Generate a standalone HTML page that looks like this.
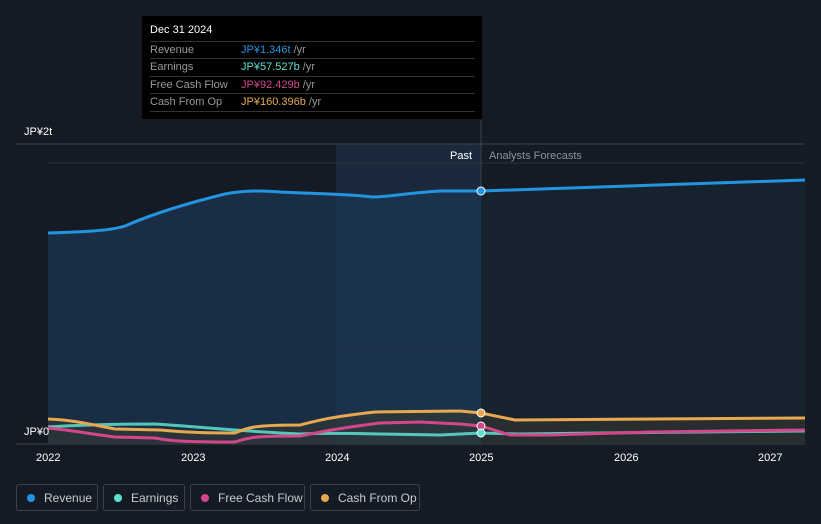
<!DOCTYPE html>
<html><head><meta charset="utf-8"><style>
body{margin:0;background:#151b25;width:821px;height:524px;overflow:hidden;font-family:"Liberation Sans",sans-serif;position:relative}
.tt{position:absolute;left:142px;top:16px;width:340px;height:103px;background:#000;color:#fff;font-size:11px}
.tt .h{position:absolute;left:8px;top:8px;font-size:11px}
.row{position:absolute;left:8px;width:325px;border-top:1px solid #333;height:17px;line-height:17px;color:#999}
.row span{position:absolute;left:91px}
.row i{font-style:normal;color:#999}
.lg{position:absolute;top:484px;height:27px;border:1px solid #3a414d;border-radius:3px;color:#c8cbd0;font-size:12px;line-height:27px;box-sizing:border-box}
.lg b{position:absolute;left:10px;top:9px;width:8px;height:8px;border-radius:50%}
.lg span{position:absolute;left:27px}
.ax{position:absolute;top:452px;color:#fff;font-size:11px}
</style></head><body>
<svg width="821" height="524" style="position:absolute;left:0;top:0">
<rect x="336" y="144" width="145" height="300" fill="#1a2a3c"/>
<line x1="16" y1="144" x2="805" y2="144" stroke="#39404b"/>
<line x1="48" y1="163" x2="805" y2="163" stroke="#2a313c"/>
<line x1="48" y1="256" x2="805" y2="256" stroke="#2a313c"/>
<line x1="48" y1="350" x2="805" y2="350" stroke="#2a313c"/>
<line x1="16" y1="444" x2="805" y2="444" stroke="#39404b"/>
<line x1="481" y1="120" x2="481" y2="444" stroke="#3a4350"/>
<path d="M48,233 C80,232 110,231 125,226 C150,215 180,205 225,194 C240,191 258,190 280,192 C320,194 350,194 372,197 C390,197 405,193 440,191 L481,191 L805,180 L805,444 L48,444Z" fill="#1b3650" opacity="0.75"/>
<path d="M481,191 L805,180 L805,444 L481,444Z" fill="#17222f"/>
<path d="M48,233 C80,232 110,231 125,226 C150,215 180,205 225,194 C240,191 258,190 280,192 C320,194 350,194 372,197 C390,197 405,193 440,191 L481,191 L805,180" fill="none" stroke="#2394df" stroke-width="3"/>
<path d="M48,419 C70,420 80,422 115,429 L160,430 C175,431 185,433 235,433 C250,427 255,425 300,425 C320,420 330,417 375,412 L460,411 L481,413 L515,420 L805,418 L805,444 L48,444Z" fill="#3a3a30" opacity="0.5"/>
<path d="M48,427 C80,425 120,424 155,424 C190,426 220,430 300,434 C320,433 340,433 380,434 L440,435 L481,433 L520,434 L600,433 L805,431" fill="none" stroke="#5ee0d0" stroke-width="3" opacity="0.85"/>
<path d="M48,428 C70,430 90,434 115,437 L155,438 C170,441 185,442 235,442 C250,437 255,436 300,436 C320,432 340,428 380,423 L420,422 L460,424 L481,426 L510,435 L550,435 L650,432 L805,430" fill="none" stroke="#d3478a" stroke-width="3"/>
<path d="M48,419 C70,420 80,422 115,429 L160,430 C175,431 185,433 235,433 C250,427 255,425 300,425 C320,420 330,417 375,412 L460,411 L481,413 L515,420 L805,418" fill="none" stroke="#e8a850" stroke-width="3"/>
<circle cx="481" cy="191" r="4" fill="#2394df" stroke="#fff"/>
<circle cx="481" cy="413" r="4" fill="#e8a850" stroke="#fff"/>
<circle cx="481" cy="426" r="4" fill="#d3478a" stroke="#fff"/>
<circle cx="481" cy="433" r="4" fill="#5ee0d0" stroke="#fff"/>
</svg>
<div style="position:absolute;left:24px;top:126px;color:#fff;font-size:11px">JP¥2t</div>
<div style="position:absolute;left:24px;top:426px;color:#fff;font-size:11px">JP¥0</div>
<div style="position:absolute;left:450px;top:150px;color:#fff;font-size:11px">Past</div>
<div style="position:absolute;left:489px;top:150px;color:#8a929c;font-size:11px">Analysts Forecasts</div>
<div class="ax" style="left:36px">2022</div><div class="ax" style="left:181px">2023</div><div class="ax" style="left:325px">2024</div><div class="ax" style="left:469px">2025</div><div class="ax" style="left:614px">2026</div><div class="ax" style="left:758px">2027</div>
<div class="tt"><div class="h">Dec 31 2024</div>
<div class="row" style="top:25px">Revenue<span style="color:#2394df">JP¥1.346t <i>/yr</i></span></div>
<div class="row" style="top:42px">Earnings<span style="color:#5ee0d0">JP¥57.527b <i>/yr</i></span></div>
<div class="row" style="top:60px">Free Cash Flow<span style="color:#d3478a">JP¥92.429b <i>/yr</i></span></div>
<div class="row" style="top:77px;border-bottom:1px solid #333">Cash From Op<span style="color:#e8a850">JP¥160.396b <i>/yr</i></span></div>
</div>
<div class="lg" style="left:16px;width:82px"><b style="background:#2394df"></b><span>Revenue</span></div>
<div class="lg" style="left:103px;width:82px"><b style="background:#5ee0d0"></b><span>Earnings</span></div>
<div class="lg" style="left:190px;width:115px"><b style="background:#d3478a"></b><span>Free Cash Flow</span></div>
<div class="lg" style="left:310px;width:110px"><b style="background:#e8a850"></b><span>Cash From Op</span></div>
</body></html>
